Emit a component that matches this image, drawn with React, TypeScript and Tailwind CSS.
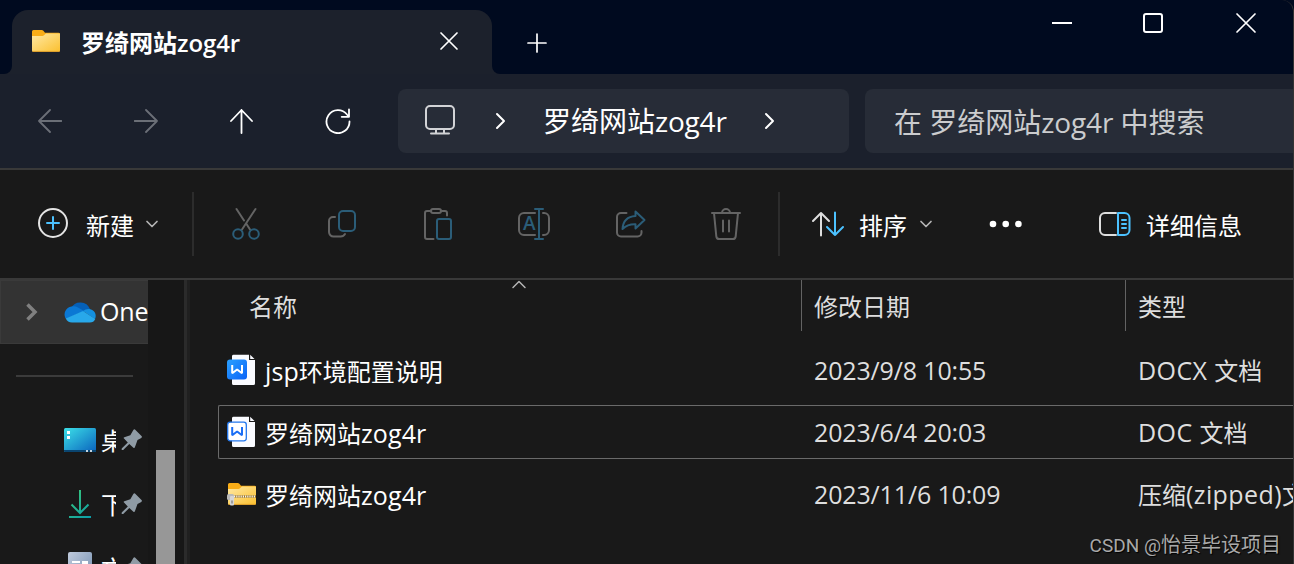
import type { ReactNode } from "react";

const cjk = /([\u4e00-\u9fff]+)/;

// Latin runs get their own size and tracking, Chinese runs stay on the em grid
function Label({ text, latin = "text-[25px]" }: { text: string; latin?: string }) {
  return (
    <>
      {text.split(cjk).map((part, i) =>
        cjk.test(part) ? (
          <span key={i}>{part}</span>
        ) : (
          <span key={i} className={latin}>{part}</span>
        )
      )}
    </>
  );
}

function Glyph({ children, w = 48, h = 48 }: { children: ReactNode; w?: number; h?: number }) {
  return (
    <svg
      width={w}
      height={h}
      viewBox={`0 0 ${w} ${h}`}
      fill="none"
      strokeWidth="2"
      strokeLinecap="round"
      strokeLinejoin="round"
      className="shrink-0"
    >
      {children}
    </svg>
  );
}

const GRAY = "#646464";
const TEAL = "#2b5d78";
const BLUE = "#4cc2ff";

const navIcons = [
  <Glyph key="back" w={24} h={26}>
    <path stroke="#6b6f77" strokeWidth="1.8" d="M23.5 13H1M12 2 1 13l11 11" />
  </Glyph>,
  <Glyph key="forward" w={24} h={26}>
    <path stroke="#6b6f77" strokeWidth="1.8" d="M.5 13H23M12 2l11 11-11 11" />
  </Glyph>,
  <Glyph key="up" w={24} h={26}>
    <path stroke="#fff" strokeWidth="1.8" d="M11.5 25V2M1 13 11.5 2 22 13" />
  </Glyph>,
  <Glyph key="refresh" w={26} h={26}>
    <path stroke="#fff" strokeWidth="1.8" d="M24.5 13.5A11.5 11.5 0 1 1 22 6.500l2 2.300M24 1.500v7.300h-7.300" />
  </Glyph>,
];

const editIcons = [
  <Glyph key="cut">
    <path stroke={GRAY} d="m14.500 9 7.500 11.500m2.500 3.500 3.500 5.500M33.500 9 20 29.500" />
    <circle cx="16" cy="34" r="4.800" stroke={TEAL} />
    <circle cx="32" cy="34" r="4.800" stroke={TEAL} />
  </Glyph>,
  <Glyph key="copy">
    <path stroke={GRAY} d="M17 17h-2a4 4 0 0 0-4 4v11a4.500 4.500 0 0 0 4.500 4.500h7A5 5 0 0 0 27 34" />
    <rect x="21" y="11" width="16" height="20" rx="4" stroke={TEAL} />
  </Glyph>,
  <Glyph key="paste">
    <path stroke={GRAY} d="M17 11h-4a2 2 0 0 0-2 2v24a2 2 0 0 0 2 2h6.500M27 11h4a2 2 0 0 1 2 2v2.500" />
    <rect x="17" y="9" width="10" height="4" rx="2" stroke={GRAY} />
    <rect x="23" y="19" width="14" height="20" rx="2" stroke={TEAL} />
  </Glyph>,
  <Glyph key="rename">
    <path stroke={GRAY} d="M25 13H14a5 5 0 0 0-5 5v12a5 5 0 0 0 5 5h11M33 13h1a5 5 0 0 1 5 5v12a5 5 0 0 1-5 5h-1" />
    <path stroke={TEAL} d="M29 9v30M25 9h8M25 39h8" />
    <text x="13" y="30" fill={TEAL} className="font-['Open_Sans',sans-serif] text-[19px] font-semibold">A</text>
  </Glyph>,
  <Glyph key="share">
    <path stroke={GRAY} d="M20.500 13H15a4 4 0 0 0-4 4v15.500a4 4 0 0 0 4 4h16.500a4 4 0 0 0 4-4V31" />
    <path stroke={TEAL} d="M29.500 11.500 38.500 20l-9 8.500v-4.200c-5.500-.3-9 1-13 4.700.5-8 5.500-12.500 13-13z" />
  </Glyph>,
  <Glyph key="delete">
    <path stroke={GRAY} d="M10 13h28M20 13a4 4 0 0 1 8 0M12 13l2.300 23.300A3 3 0 0 0 17.300 39h13.400a3 3 0 0 0 3-2.700L36 13M21 20.500v11M27 20.500v11" />
  </Glyph>,
];

function FolderIcon({ zip = false }: { zip?: boolean }) {
  const id = zip ? "zipFill" : "folderFill";
  return (
    <svg width="30" height="24" viewBox="0 0 30 24" className="shrink-0">
      <defs>
        <linearGradient id={id} x1="0" y1="0" x2="1" y2="1">
          <stop offset="0" stopColor="#ffe9a5" />
          <stop offset="1" stopColor="#fbc02f" />
        </linearGradient>
      </defs>
      <path d="M1 2.500A1.500 1.500 0 0 1 2.500 1h8.200q1 0 1.700.8L14 3.700h13.500A1.500 1.500 0 0 1 29 5v8H1z" fill="#f9ad17" />
      <path d="M1 7h10.500q.8 0 1.500-.7l2-1.800h14v17a1.200 1.200 0 0 1-1.200 1.200H2.200A1.200 1.200 0 0 1 1 21.500z" fill={`url(#${id})`} />
      <path d="M1.500 22.400h27" stroke="#e0a02b" />
      {zip && (
        <>
          <path d="M7 14.500h22" stroke="#9a7425" strokeWidth="2.400" />
          <path d="M7 14.500h22" stroke="#f3f3f3" strokeWidth="1.800" strokeDasharray="1.200 1" />
          <rect x="0" y="12" width="7" height="6" rx="1.500" fill="#b9b9b9" />
          <rect x="3" y="14" width="4" height="9.500" rx="1" fill="#d6d6d6" />
          <path d="M5 18.500v3" stroke="#666" />
        </>
      )}
    </svg>
  );
}

function WordIcon({ outline = false }: { outline?: boolean }) {
  return (
    <svg width="30" height="32" viewBox="0 0 30 32" className="shrink-0">
      <defs>
        <linearGradient id="wordFill" x1="0" y1="0" x2="1" y2="1">
          <stop offset="0" stopColor="#2aa0ff" />
          <stop offset="1" stopColor="#0a63f7" />
        </linearGradient>
      </defs>
      <path d="M5 2A1.500 1.500 0 0 1 6.500.8H22V6h6v23.500a1.500 1.500 0 0 1-1.500 1.500h-20A1.500 1.500 0 0 1 5 29.500z" fill="#fafbff" />
      <path d="M23.200.8 27.500 5h-4.300z" fill="#fafbff" />
      {outline ? (
        <rect x=".7" y="6.200" width="18.600" height="18.600" rx="2.500" fill="#fff" stroke="#2277ee" strokeWidth="1.300" />
      ) : (
        <rect x="0" y="5.500" width="20" height="20" rx="3" fill="url(#wordFill)" />
      )}
      <path
        d="M5.200 11v8.300l4.900-3.800 4.900 3.800V11"
        fill="none"
        stroke={outline ? "#1a6df5" : "#fff"}
        strokeWidth="2"
        strokeLinejoin="bevel"
      />
    </svg>
  );
}

function Pin() {
  return (
    <svg width="22" height="22" viewBox="0 0 22 22" className="shrink-0">
      <path
        d="M12.500.8q1-.9 2 .1l6 6q1 1.100-.2 2l-3.800 2.200-2.600 7.200q-.5 1.300-1.500.4L8.300 15l-6.100 6.100H.7v-1.500l6.100-6.100L3 9.600q-.8-.9.300-1.400l6-2z"
        fill="#8f9ba5"
      />
    </svg>
  );
}

const shortcuts = [
  {
    name: "桌面",
    icon: (
      <svg width="32" height="24" viewBox="0 0 32 24">
        <defs>
          <linearGradient id="desk" x1="0" y1="0" x2="1" y2="1">
            <stop offset="0" stopColor="#3ce0e8" />
            <stop offset="1" stopColor="#0a62bd" />
          </linearGradient>
        </defs>
        <rect width="32" height="24" rx="1.500" fill="url(#desk)" />
        <path d="M0 22h32v.5a1.500 1.500 0 0 1-1.500 1.500h-29A1.500 1.500 0 0 1 0 22.500z" fill="#0a4570" />
        <path d="M3 3h3v3H3zM3 8h3v3H3z" fill="#fff" />
        <path d="M22 22h2v2h-2zM26 22h2v2h-2z" fill="#c3d4e2" />
      </svg>
    ),
  },
  {
    name: "下载",
    icon: (
      <svg width="32" height="28" viewBox="0 0 32 28" fill="none" stroke="url(#down)" strokeWidth="2">
        <defs>
          <linearGradient id="down" gradientUnits="userSpaceOnUse" x1="5" y1="2" x2="27" y2="26">
            <stop offset="0" stopColor="#3bc878" />
            <stop offset="1" stopColor="#0c9fa8" />
          </linearGradient>
        </defs>
        <path d="M16 0v22M7.500 14.500 16 23l8.500-8.500M5 27h22" />
      </svg>
    ),
  },
  {
    name: "文档",
    icon: (
      <svg width="32" height="32" viewBox="0 0 32 32">
        <defs>
          <linearGradient id="docs" x1="0" y1="0" x2="1" y2="1">
            <stop offset="0" stopColor="#c0cbdc" />
            <stop offset="1" stopColor="#6f8caf" />
          </linearGradient>
        </defs>
        <rect x="4" width="24" height="32" rx="2" fill="url(#docs)" />
        <path d="M8 9h8v2H8zM8 14h8v2H8zM18 9h6v6h-6z" fill="#fff" />
      </svg>
    ),
  },
];

const files = [
  { name: "jsp环境配置说明", date: "2023/9/8 10:55", type: "DOCX 文档", icon: <WordIcon /> },
  { name: "罗绮网站zog4r", date: "2023/6/4 20:03", type: "DOC 文档", icon: <WordIcon outline />, focused: true },
  { name: "罗绮网站zog4r", date: "2023/11/6 10:09", type: "压缩(zipped)文件夹", icon: <FolderIcon zip /> },
];

function TitleBar() {
  return (
    <div className="flex h-[74px] bg-[#1c212c]">
      <div className="w-3 rounded-br-lg bg-[#000a1f]" />
      <div className="w-[480px] bg-[linear-gradient(#000a1f_50%,#1c212c_50%)] pt-2.5">
        <div className="flex h-16 items-center rounded-t-2xl bg-[#1c212c] pb-0.5 pl-[19px]">
          <FolderIcon />
          <span className="ml-5 w-[358px] shrink-0 pt-1 text-[24px] leading-none font-bold text-white">
            <Label text="罗绮网站zog4r" latin="text-[24px] tracking-[-0.1px] font-semibold" />
          </span>
          <Glyph w={20} h={20}>
            <path stroke="#fff" strokeWidth="1.700" d="m2 2 16 16M18 2 2 18" />
          </Glyph>
        </div>
      </div>
      <div className="flex flex-1 items-start rounded-bl-lg bg-[#000a1f]">
        <div className="ml-[35px] pt-[33px]">
          <Glyph w={20} h={20}>
            <path stroke="#fff" strokeWidth="1.700" d="M10 1v18M1 10h18" />
          </Glyph>
        </div>
        <div className="ml-auto flex gap-[70px] pt-3 pr-[37px]">
          <Glyph w={22} h={22}>
            <path stroke="#fff" strokeLinecap="butt" d="M1 11h20" />
          </Glyph>
          <Glyph w={22} h={22}>
            <rect x="1" y="2" width="18" height="18" rx="2" stroke="#fff" />
          </Glyph>
          <Glyph w={22} h={22}>
            <path stroke="#fff" strokeWidth="1.700" d="m2 2 18 18M20 2 2 20" />
          </Glyph>
        </div>
      </div>
    </div>
  );
}

function Chevron() {
  return (
    <Glyph w={12} h={18}>
      <path stroke="#fff" d="m2 2 7 7-7 7" />
    </Glyph>
  );
}

function NavBar() {
  return (
    <div className="flex h-24 items-center border-b-2 border-[#393939] bg-[#1b202c] pl-0.5">
      {navIcons.map((icon, i) => (
        <div key={i} className="flex w-24 justify-center pb-px">{icon}</div>
      ))}
      <div className="ml-3 flex h-16 w-[451px] items-center rounded-lg bg-[#272c37] pl-[26px]">
        <div className="pb-0.5">
          <Glyph w={32} h={32}>
            <rect x="2" y="2" width="28" height="23" rx="4" stroke="#d2d3d6" />
            <path stroke="#d2d3d6" d="M12 25v4M20 25v4M7 29.500h18" />
          </Glyph>
        </div>
        <div className="ml-[39px]"><Chevron /></div>
        <span className="ml-9 w-[221px] text-[28px] leading-none whitespace-nowrap text-white">
          <Label text="罗绮网站zog4r" latin="text-[28px] tracking-[-0.2px]" />
        </span>
        <Chevron />
      </div>
      <div className="ml-4 flex h-16 flex-1 items-center rounded-l-lg bg-[#272c37] pt-0.5 pl-[29px] text-[28px] leading-none whitespace-nowrap text-[#cbccce]">
        <span>
          <Label text="在 罗绮网站zog4r 中搜索" latin="text-[28px] tracking-[-0.1px]" />
        </span>
      </div>
    </div>
  );
}

function DownChevron() {
  return (
    <Glyph w={14} h={10}>
      <path stroke="#b5b5b5" strokeWidth="1.700" d="m2 2.500 5 5 5-5" />
    </Glyph>
  );
}

function Toolbar() {
  return (
    <div className="flex h-[110px] items-center border-b-2 border-[#393939] text-[24px] leading-none text-white">
      <div className="flex w-48 items-center pl-[37px]">
        <Glyph w={32} h={34}>
          <circle cx="16" cy="16" r="14" stroke="#e4e4e4" />
          <path stroke={BLUE} d="M16 10v12M10 16h12" />
        </Glyph>
        <span className="mr-[11px] ml-[17px] pt-[3px]">新建</span>
        <DownChevron />
      </div>
      <div className="mr-1 h-16 w-0.5 bg-[#2c2c2c]" />
      {editIcons.map((icon, i) => (
        <div key={i} className="flex w-24 justify-center">{icon}</div>
      ))}
      <div className="ml-1 h-16 w-0.5 bg-[#2c2c2c]" />
      <div className="ml-[31px] flex items-center">
        <Glyph w={34} h={28}>
          <path stroke="#dedede" d="M10 25.500V3M2 11l8-8 8 8" />
          <path stroke={BLUE} d="M24 2.500V25M16 17l8 8 8-8" />
        </Glyph>
        <span className="mr-3 ml-3.5 pt-[3px]">排序</span>
        <DownChevron />
      </div>
      <div className="ml-[56px]">
        <svg width="34" height="8" viewBox="0 0 34 8" fill="#fff">
          <circle cx="4" cy="4" r="3.300" />
          <circle cx="16.700" cy="4" r="3.300" />
          <circle cx="29.400" cy="4" r="3.300" />
        </svg>
      </div>
      <div className="ml-[75px] flex items-center">
        <Glyph w={34} h={26}>
          <path stroke="#dedede" d="M18 2H7a5 5 0 0 0-5 5v12a5 5 0 0 0 5 5h11" />
          <path stroke={BLUE} d="M20 2h6.500a5 5 0 0 1 5 5v12a5 5 0 0 1-5 5H20zM24 9h4M24 13h4M24 17h4" />
        </Glyph>
        <span className="ml-3.5 pt-[3px]">详细信息</span>
      </div>
    </div>
  );
}

function Sidebar() {
  return (
    <div className="flex w-[190px] shrink-0">
      <div className="w-[148px] overflow-hidden">
        <div className="flex h-16 items-center border border-r-0 border-[#3a3a3a] bg-[#333] pl-6">
          <svg width="14" height="20" viewBox="0 0 14 20" fill="none" stroke="#808080" strokeWidth="3.500" className="shrink-0">
            <path d="m2.500 2.500 7.500 7.500-7.500 7.500" />
          </svg>
          <svg width="32" height="22" viewBox="0 0 32 22" className="ml-[25px] shrink-0">
            <path d="M7 7a10.500 10.500 0 0 1 19 1L17 13z" fill="#0560b8" />
            <path d="M7.500 5.500A8 8 0 0 0 2 18l18-8-6-3.500a8 8 0 0 0-6.500-1z" fill="#0b78d4" />
            <path d="M19 10q3-2.500 6.500-2A7 7 0 0 1 31 18z" fill="#1490df" />
            <path d="M1.800 17.500 19 10l12.300 8q-1.500 3.500-5.500 3.500H8q-4.500 0-6.200-4z" fill="#28a8ea" />
          </svg>
          <span className="ml-1 text-[25px] tracking-[-0.2px] text-white">OneDrive</span>
        </div>
        <div className="mx-4 my-[31px] h-0.5 w-[117px] bg-[#3b3b3b]" />
        {shortcuts.map((s) => (
          <div key={s.name} className="flex h-16 items-center pl-16 text-[24px] leading-none text-white">
            {s.icon}
            <span className="mr-[5px] ml-[5px] w-[15px] shrink-0 overflow-hidden pt-0.5 whitespace-nowrap">{s.name}</span>
            <Pin />
          </div>
        ))}
      </div>
      <div className="w-9 bg-[#171717] pt-[170px] pl-2">
        <div className="h-full w-[19px] bg-[#979797]" />
      </div>
      <div className="w-[3px] bg-[#2b2b2b]" />
      <div className="w-[3px] bg-[#202020]" />
    </div>
  );
}

function FileList() {
  return (
    <div className="flex-1 overflow-hidden pl-7 text-[24px] leading-none whitespace-nowrap">
      <div className="mb-3 flex h-[51px] items-center text-[#dedede]">
        <div className="flex h-full w-[583px] shrink-0 items-center pl-[31px]">
          <span className="w-[262px] shrink-0 pt-0.5">名称</span>
          <div className="self-start">
            <Glyph w={16} h={10}>
              <path stroke="#b5b5b5" strokeWidth="1.500" d="m2 7.500 6-6 6 6" />
            </Glyph>
          </div>
        </div>
        <div className="flex h-full w-[324px] shrink-0 items-center border-l border-[#636363] pt-0.5 pl-3">修改日期</div>
        <div className="flex h-full items-center border-l border-[#636363] pt-0.5 pl-3">类型</div>
      </div>
      <div className="flex flex-col gap-2">
        {files.map((f) => (
          <div
            key={f.date}
            className={`flex h-[54px] items-center rounded-l-xs border border-r-0 pl-2 text-[#dedede] ${
              f.focused ? "border-[#6a6a6a]" : "border-transparent"
            }`}
          >
            <div className="flex w-[587px] shrink-0 items-center text-white">
              {f.icon}
              <span className="ml-2 pt-0.5"><Label text={f.name} latin="text-[25px] tracking-[0.1px]" /></span>
            </div>
            <div className="w-[324px] shrink-0"><Label text={f.date} latin="text-[25px] tracking-[-0.15px]" /></div>
            <div className="shrink-0 pt-px"><Label text={f.type} latin="text-[25px] tracking-[0.4px]" /></div>
          </div>
        ))}
      </div>
    </div>
  );
}

export default function App() {
  return (
    <div className="relative flex h-[564px] w-[1294px] flex-col overflow-hidden bg-[#191919] font-['Open_Sans','Noto_Sans_CJK_SC',sans-serif]">
      <TitleBar />
      <NavBar />
      <Toolbar />
      <div className="flex min-h-0 flex-1">
        <Sidebar />
        <FileList />
      </div>
      <div className="pointer-events-none absolute inset-0 rounded-tr-xl border-r border-[#333]" />
      <div className="absolute right-[13px] bottom-[9px] text-[20px] leading-none text-[#a9a9a9] [text-shadow:1px_1px_1px_#000]">
        <Label text="CSDN @怡景毕设项目" latin="font-['Roboto',sans-serif] text-[19px]" />
      </div>
    </div>
  );
}
